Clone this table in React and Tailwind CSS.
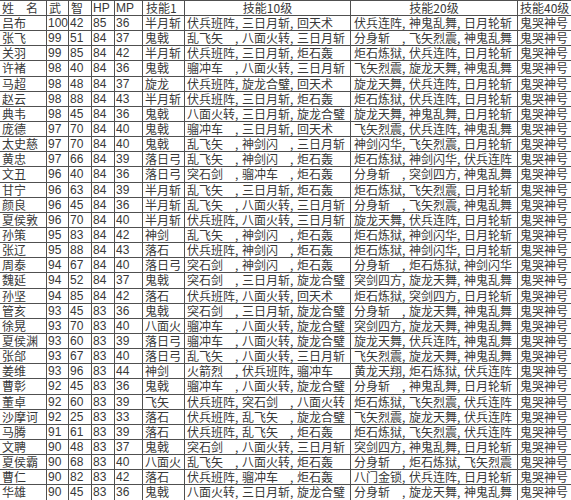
const rows = [
  ["吕布", 100, 42, 85, 36, "半月斩", "伏兵班阵,三日月斩,回天术", "伏兵连阵,神鬼乱舞,日月轮斩"],
  ["张飞", 99, 51, 84, 37, "鬼戟", "乱飞矢,八面火转,三日月斩", "分身斩,飞矢烈震,神鬼乱舞"],
  ["关羽", 99, 85, 84, 42, "半月斩", "伏兵班阵,三日月斩,炬石轰", "炬石炼狱,伏兵连阵,日月轮斩"],
  ["许褚", 98, 40, 84, 36, "鬼戟", "骝冲车,八面火转,三日月斩", "飞矢烈震,旋龙天舞,神鬼乱舞"],
  ["马超", 98, 48, 84, 37, "旋龙", "伏兵班阵,旋龙合璧,回天术", "旋龙天舞,伏兵连阵,日月轮斩"],
  ["赵云", 98, 88, 84, 43, "半月斩", "伏兵班阵,三日月斩,炬石轰", "炬石炼狱,伏兵连阵,日月轮斩"],
  ["典韦", 98, 45, 84, 36, "鬼戟", "八面火转,三日月斩,旋龙合璧", "旋龙天舞,神鬼乱舞,日月轮斩"],
  ["庞德", 97, 70, 84, 40, "鬼戟", "骝冲车,三日月斩,回天术", "飞矢烈震,伏兵连阵,神鬼乱舞"],
  ["太史慈", 97, 70, 84, 40, "鬼戟", "乱飞矢,神剑闪,三日月斩", "神剑闪华,飞矢烈震,日月轮斩"],
  ["黄忠", 97, 66, 84, 39, "落日弓", "乱飞矢,神剑闪,炬石轰", "炬石炼狱,神剑闪华,伏兵连阵"],
  ["文丑", 96, 40, 84, 36, "落日弓", "突石剑,骝冲车,炬石轰", "分身斩,突剑四方,神鬼乱舞"],
  ["甘宁", 96, 63, 84, 39, "半月斩", "乱飞矢,三日月斩,炬石轰", "炬石炼狱,飞矢烈震,日月轮斩"],
  ["颜良", 96, 45, 84, 36, "半月斩", "乱飞矢,八面火转,三日月斩", "分身斩,飞矢烈震,神鬼乱舞"],
  ["夏侯敦", 96, 70, 84, 40, "半月斩", "伏兵班阵,八面火转,三日月斩", "旋龙天舞,伏兵连阵,日月轮斩"],
  ["孙策", 95, 83, 84, 42, "神剑", "乱飞矢,神剑闪,炬石轰", "炬石炼狱,神剑闪华,日月轮斩"],
  ["张辽", 95, 88, 84, 43, "落石", "伏兵班阵,神剑闪,炬石轰", "炬石炼狱,神剑闪华,日月轮斩"],
  ["周泰", 94, 67, 84, 40, "落日弓", "突石剑,神剑闪,炬石轰", "分身斩,炬石炼狱,神剑闪华"],
  ["魏延", 94, 52, 84, 37, "鬼戟", "突石剑,三日月斩,旋龙合璧", "突剑四方,旋龙天舞,神鬼乱舞"],
  ["孙坚", 94, 85, 84, 42, "落石", "伏兵班阵,八面火转,回天术", "炬石炼狱,突剑四方,日月轮斩"],
  ["管亥", 93, 45, 83, 36, "鬼戟", "突石剑,三日月斩,旋龙合璧", "分身斩,旋龙天舞,神鬼乱舞"],
  ["徐晃", 93, 70, 83, 40, "八面火", "骝冲车,八面火转,旋龙合璧", "突剑四方,旋龙天舞,神鬼乱舞"],
  ["夏侯渊", 93, 60, 83, 39, "落日弓", "骝冲车,八面火转,旋龙合璧", "旋龙天舞,伏兵连阵,神鬼乱舞"],
  ["张郃", 93, 67, 83, 40, "落日弓", "乱飞矢,八面火转,三日月斩", "飞矢烈震,旋龙天舞,神鬼乱舞"],
  ["姜维", 93, 96, 83, 44, "神剑", "火箭烈,伏兵班阵,骝冲车", "黄龙天翔,炬石炼狱,伏兵连阵"],
  ["曹彰", 92, 45, 83, 36, "鬼戟", "骝冲车,八面火转,旋龙合璧", "分身斩,神鬼乱舞,日月轮斩"],
  ["董卓", 92, 60, 83, 39, "飞矢", "伏兵班阵,突石剑,八面火转", "炬石炼狱,飞矢烈震,伏兵连阵"],
  ["沙摩诃", 92, 25, 83, 33, "落石", "伏兵班阵,乱飞矢,旋龙合璧", "飞矢烈震,旋龙天舞,伏兵连阵"],
  ["马腾", 91, 61, 83, 39, "落石", "伏兵班阵,乱飞矢,炬石轰", "炬石炼狱,飞矢烈震,伏兵连阵"],
  ["文聘", 90, 48, 83, 37, "鬼戟", "突石剑,八面火转,三日月斩", "突剑四方,神鬼乱舞,日月轮斩"],
  ["夏侯霸", 90, 68, 83, 40, "八面火", "乱飞矢,八面火转,炬石轰", "分身斩,炬石炼狱,飞矢烈震"],
  ["曹仁", 90, 82, 83, 42, "落石", "伏兵班阵,骝冲车,炬石轰", "八门金锁,伏兵连阵,日月轮斩"],
  ["华雄", 90, 45, 83, 36, "鬼戟", "八面火转,三日月斩,旋龙合璧", "分身斩,旋龙天舞,神鬼乱舞"],
];

const cjk = "font-['Noto_Sans_CJK_SC',sans-serif]";
const num = "font-['Liberation_Sans',Arial,sans-serif]";
const cell = "h-[15.15px] border-r border-b border-[#505050] text-[12px] leading-[12px] text-[#383838] whitespace-nowrap flex items-center";

// each skill gets a 4-char slot, then a half-width comma
const Skills = ({ text }) => {
  const parts = text.split(",");
  return (
    <>
      {parts.map((p, i) => (
        <span key={i} className="flex">
          <span className={i < parts.length - 1 ? "inline-block w-[48px]" : "inline-block"}>{p}</span>
          {i < parts.length - 1 && <span className="inline-block w-[7px]">,</span>}
        </span>
      ))}
    </>
  );
};

export default function App() {
  return (
    <div className={`w-[571px] h-[500px] overflow-hidden bg-white ${cjk}`}>
      <div className="grid grid-cols-[47px_22px_23px_23px_28px_42px_166px_167px_53px] border-t border-[#505050]">
        <div className={`${cell} pl-[2px] h-[15px]`}>
          <span>姓</span>
          <span className="ml-[12px]">名</span>
        </div>
        <div className={`${cell} pl-[2px] h-[15px]`}>武</div>
        <div className={`${cell} pl-[2px] h-[15px]`}>智</div>
        <div className={`${cell} ${num} pl-[1px] h-[15px] text-[11px]`}>HP</div>
        <div className={`${cell} ${num} pl-[1px] h-[15px] text-[11px]`}>MP</div>
        <div className={`${cell} pl-[3px] h-[15px]`}>技能1</div>
        <div className={`${cell} justify-center h-[15px]`}>技能10级</div>
        <div className={`${cell} justify-center h-[15px]`}>技能20级</div>
        <div className={`${cell} pl-[2px] h-[15px] border-r-0`}>技能40级</div>

        {rows.map((r) => (
          <div key={r[0]} className="contents">
            <div className={`${cell} pl-[2px]`}>{r[0]}</div>
            <div className={`${cell} ${num} pl-[1px]`}>{r[1]}</div>
            <div className={`${cell} ${num} pl-[1px]`}>{r[2]}</div>
            <div className={`${cell} ${num} pl-[1px]`}>{r[3]}</div>
            <div className={`${cell} ${num} pl-[1px]`}>{r[4]}</div>
            <div className={`${cell} pl-[2px]`}>{r[5]}</div>
            <div className={`${cell} pl-[2px]`}>
              <Skills text={r[6]} />
            </div>
            <div className={`${cell} pl-[3px]`}>
              <Skills text={r[7]} />
            </div>
            <div className={`${cell} pl-[2px] border-r-0`}>鬼哭神号</div>
          </div>
        ))}
      </div>
    </div>
  );
}
